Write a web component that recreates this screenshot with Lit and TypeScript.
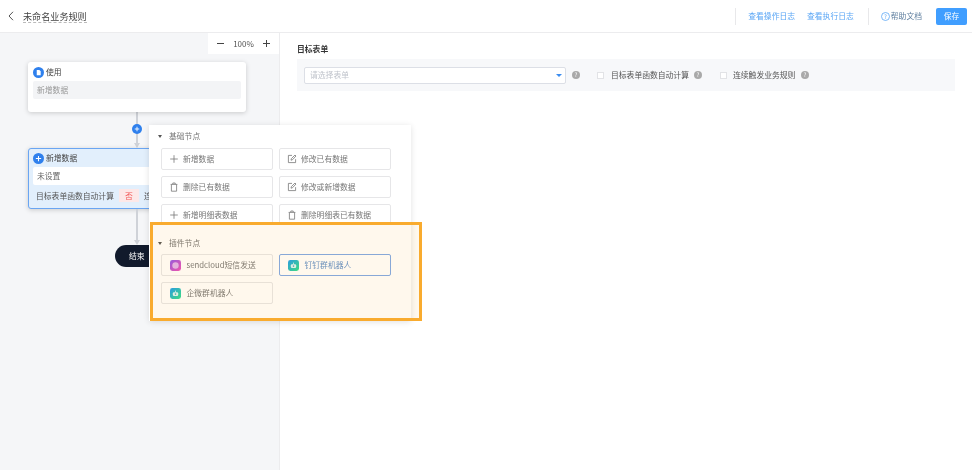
import { LitElement, html, css, svg } from "lit";
import { customElement } from "lit/decorators.js";

const plus = svg`<path d="M5 1.2v7.6M1.2 5h7.6" stroke="#777" stroke-width=".8" fill="none"/>`;
const edit = svg`<path d="M8.6 5.2v3.4H1.4V1.4h3.6M4 6.2l.3-1.5L8 1l1 1-3.6 3.8z" stroke="#777" stroke-width=".8" fill="none"/>`;
const trash = svg`<path d="M2.4 2.6v6.6h5.2V2.6M1.6 2.4h6.8M3.8 2.2V1h2.4v1.2" stroke="#777" stroke-width=".8" fill="none"/>`;
const ico = (p: unknown) => html`<svg class="op" viewBox="0 0 10 10">${p}</svg>`;

const basics: [string, unknown][] = [
  ["新增数据", plus], ["修改已有数据", edit],
  ["删除已有数据", trash], ["修改或新增数据", edit],
  ["新增明细表数据", plus], ["删除明细表已有数据", trash],
];

const robot = html`<svg viewBox="0 0 11 11" class="plug"><defs><linearGradient id="g" x1="0" y1="0" x2="1" y2="1"><stop offset="0" stop-color="#1a9cf0"/><stop offset="1" stop-color="#2fe08a"/></linearGradient></defs><rect width="11" height="11" rx="2.4" fill="url(#g)"/><rect x="2.8" y="4.2" width="5.4" height="3.8" rx="1.2" fill="#fff" opacity=".85"/><rect x="5.1" y="2.6" width=".8" height="1.6" fill="#fff" opacity=".85"/><circle cx="5.5" cy="6.1" r=".8" fill="#3aa8b8"/></svg>`;
const cloud = html`<svg viewBox="0 0 11 11" class="plug"><defs><linearGradient id="p" x1="0" y1="0" x2="1" y2="1"><stop offset="0" stop-color="#8f55ea"/><stop offset="1" stop-color="#f04fb8"/></linearGradient></defs><rect width="11" height="11" rx="2.4" fill="url(#p)"/><circle cx="5.5" cy="5.5" r="3.2" fill="#e3b5ee"/></svg>`;
const help = html`<span class="help">?</span>`;

@customElement("app-root")
export class AppRoot extends LitElement {
  static styles = css`
    :host { display: flex; flex-direction: column; width: 972px; height: 470px; overflow: hidden; background: #fff; color: #333;
      font-family: "Noto Sans CJK SC", "Liberation Sans", sans-serif; font-size: 7.8px; line-height: 12px; filter: blur(.3px); }
    header { height: 33px; flex: none; box-sizing: border-box; border-bottom: 1px solid #ececee; display: flex; align-items: center; padding: 0 5px 0 8px; }
    .back { width: 6px; height: 10px; margin-right: 9px; }
    .title { font-size: 9.1px; color: #444; border-bottom: 1px dashed #bbb; line-height: 12px; }
    .spacer { flex: 1; }
    .div { width: 1px; height: 17px; background: #e8e8ea; }
    .link { color: #5aa6f5; }
    .d1 { margin-right: 12px; }
    .gap { margin-left: 12px; }
    .d2 { margin: 0 12px 0 14px; }
    .hicon { width: 9px; height: 9px; margin-right: 1px; }
    .doc { color: #5f7f9f; }
    .save { width: 31px; height: 17px; margin-left: 14px; background: #409eff; color: #fff; border-radius: 2px; display: flex; align-items: center; justify-content: center; }

    main { flex: 1; display: flex; position: relative; }
    .canvas { width: 280px; box-sizing: border-box; border-right: 1px solid #ececee; background: #f5f6f8; position: relative; }
    .zoom { position: absolute; left: 208px; top: 0; width: 71px; height: 21px; background: #fff; display: flex; align-items: center; justify-content: center; gap: 9px; color: #555; font-size: 8px; }
    .zoom svg { width: 7px; height: 7px; }
    .node { position: absolute; left: 28px; width: 218px; box-sizing: border-box; background: #fff; border-radius: 3px; box-shadow: 0 1px 5px rgba(0,0,0,.18); padding: 4px 5px; }
    .n1 { top: 29px; height: 50px; }
    .n2 { top: 115px; height: 61px; background: #e2effc; border: 1px solid #6aa5f2; padding: 3px 4px; }
    .nhead { display: flex; align-items: center; gap: 2px; height: 12px; color: #444; }
    .dot { width: 11px; height: 11px; border-radius: 50%; background: #2f80ed; flex: none; display: flex; align-items: center; justify-content: center; }
    .dot svg { width: 7px; height: 7px; }
    .nbox { margin-top: 3px; height: 18px; border-radius: 2px; background: #f3f4f6; color: #999; padding: 0 4px; display: flex; align-items: center; }
    .n2 .nbox { background: #fff; color: #666; }
    .nrow { display: flex; align-items: center; height: 13px; margin: 4px 0 0 3px; color: #555; white-space: nowrap; }
    .tag { width: 20px; height: 13px; margin: 0 5px 0 5px; background: #fde8e8; color: #f25757; display: flex; align-items: center; justify-content: center; }
    .line { position: absolute; left: 136px; width: 2px; background: #cfd2d8; }
    .l1 { top: 79px; height: 33px; }
    .l2 { top: 176px; height: 34px; }
    .arrow { position: absolute; left: 134px; width: 0; height: 0; border: 3px solid transparent; border-top: 5px solid #cfd2d8; border-bottom: 0; }
    .add { position: absolute; left: 132px; top: 91px; width: 10px; height: 10px; border-radius: 50%; background: #2f80ed; display: flex; align-items: center; justify-content: center; }
    .add svg { width: 6px; height: 6px; }
    .end { position: absolute; left: 115px; top: 212px; width: 50px; height: 22px; border-radius: 11px; background: #111a2c; color: #fff; padding-left: 14px; box-sizing: border-box; display: flex; align-items: center; }

    .pop { position: absolute; left: 149px; top: 92px; width: 262px; height: 196px; box-sizing: border-box; background: #fff; box-shadow: 0 1px 6px rgba(0,0,0,.12); padding: 5px 20px 0 12px; color: #666; z-index: 2; }
    .sect { display: flex; align-items: center; height: 12px; margin-left: -2px; color: #777; }
    .sect i { width: 0; height: 0; border: 2.5px solid transparent; border-top: 3.5px solid #555; border-bottom: 0; margin: 0 7px 0 -1px; }
    .grid { display: grid; grid-template-columns: 112px 112px; gap: 6px; margin-top: 6px; }
    .basic { height: 74px; overflow: hidden; }
    .second { margin-top: 15px; }
    .plugins { margin-top: 5px; }
    .btn { height: 22px; box-sizing: border-box; border: 1px solid #e6e6e8; border-radius: 2px; display: flex; align-items: center; padding-left: 7px; gap: 4px; white-space: nowrap; background: #fff; color: #777; }
    .sel { border-color: #7ea9e8; color: #5f8fc9; }
    .op { width: 10px; height: 10px; flex: none; }
    .plug { width: 11px; height: 11px; flex: none; margin: 0 1.5px 0 1px; }
    .mark { position: absolute; left: 150px; top: 189px; width: 272px; height: 99px; box-sizing: border-box; border: 3px solid #f9ab2e; background: rgba(255,170,30,.08); z-index: 3; pointer-events: none; }

    .panel { flex: 1; padding: 10px 17px 0 17px; }
    .ptitle { font-weight: 700; color: #333; height: 12px; }
    .band { margin-top: 4px; height: 32px; background: #f7f8fa; display: flex; align-items: center; padding-left: 7px; color: #555; }
    .select { width: 262px; height: 17px; box-sizing: border-box; background: #fff; border: 1px solid #dcdfe6; border-radius: 2px; color: #c0c4cc; display: flex; align-items: center; padding: 0 3px 0 5px; }
    .caret { margin-left: auto; width: 0; height: 0; border: 3px solid transparent; border-top: 3.5px solid #3b8cf0; border-bottom: 0; }
    .help { width: 8px; height: 8px; border-radius: 50%; background: #a9a9a9; color: #fff; font-size: 6px; line-height: 8px; text-align: center; flex: none; }
    .h1 { display: flex; margin-left: 6px; }
    .cb { width: 7px; height: 7px; box-sizing: border-box; background: #fff; border: 1px solid #e2e3e6; margin-right: 7px; flex: none; }
    .c1 { margin-left: 17px; }
    .c2 { margin-left: 18px; margin-right: 6px; }
    .t1 { width: 83px; }
    .t2 { width: 68px; }
  `;

  render() {
    const whitePlus = html`<svg viewBox="0 0 8 8"><path d="M4 1v6M1 4h6" stroke="#fff" stroke-width="1.2"/></svg>`;
    return html`
      <header>
        <svg class="back" viewBox="0 0 6 10"><path d="M5 .8 1 5l4 4.2" fill="none" stroke="#555" stroke-width="1"/></svg>
        <span class="title">未命名业务规则</span>
        <span class="spacer"></span>
        <span class="div d1"></span>
        <span class="link">查看操作日志</span>
        <span class="link gap">查看执行日志</span>
        <span class="div d2"></span>
        <svg class="hicon" viewBox="0 0 9 9"><circle cx="4.5" cy="4.5" r="4" fill="none" stroke="#5aa6f5" stroke-width=".8"/><text x="4.5" y="6.6" font-size="6" text-anchor="middle" fill="#5aa6f5">?</text></svg>
        <span class="doc">帮助文档</span>
        <span class="save">保存</span>
      </header>
      <main>
        <section class="canvas">
          <div class="zoom">
            <svg viewBox="0 0 7 7"><path d="M0 3.5h7" stroke="#444"/></svg>
            <span>100%</span>
            <svg viewBox="0 0 7 7"><path d="M0 3.5h7M3.5 0v7" stroke="#444"/></svg>
          </div>
          <div class="line l1"></div>
          <div class="arrow" style="top:110px"></div>
          <div class="add">${whitePlus}</div>
          <div class="node n1">
            <div class="nhead"><span class="dot"><svg viewBox="0 0 8 8"><path d="M2 1h3l1.5 1.5V7H2z" fill="#fff"/></svg></span>使用</div>
            <div class="nbox">新增数据</div>
          </div>
          <div class="node n2">
            <div class="nhead"><span class="dot">${whitePlus}</span>新增数据</div>
            <div class="nbox">未设置</div>
            <div class="nrow">目标表单函数自动计算<span class="tag">否</span>连续触发</div>
          </div>
          <div class="line l2"></div>
          <div class="arrow" style="top:207px"></div>
          <div class="end">结束</div>
        </section>
        <div class="pop">
          <div class="sect"><i></i>基础节点</div>
          <div class="grid basic">
            ${basics.map(([t, p]) => html`<div class="btn">${ico(p)}${t}</div>`)}
          </div>
          <div class="sect second"><i></i>插件节点</div>
          <div class="grid plugins">
            <div class="btn">${cloud}sendcloud短信发送</div>
            <div class="btn sel">${robot}钉钉群机器人</div>
            <div class="btn">${robot}企微群机器人</div>
          </div>
        </div>
        <div class="mark"></div>
        <section class="panel">
          <div class="ptitle">目标表单</div>
          <div class="band">
            <div class="select">请选择表单<span class="caret"></span></div>
            <span class="h1">${help}</span>
            <span class="cb c1"></span><span class="t1">目标表单函数自动计算</span>${help}
            <span class="cb c2"></span><span class="t2">连续触发业务规则</span>${help}
          </div>
        </section>
      </main>
    `;
  }
}
